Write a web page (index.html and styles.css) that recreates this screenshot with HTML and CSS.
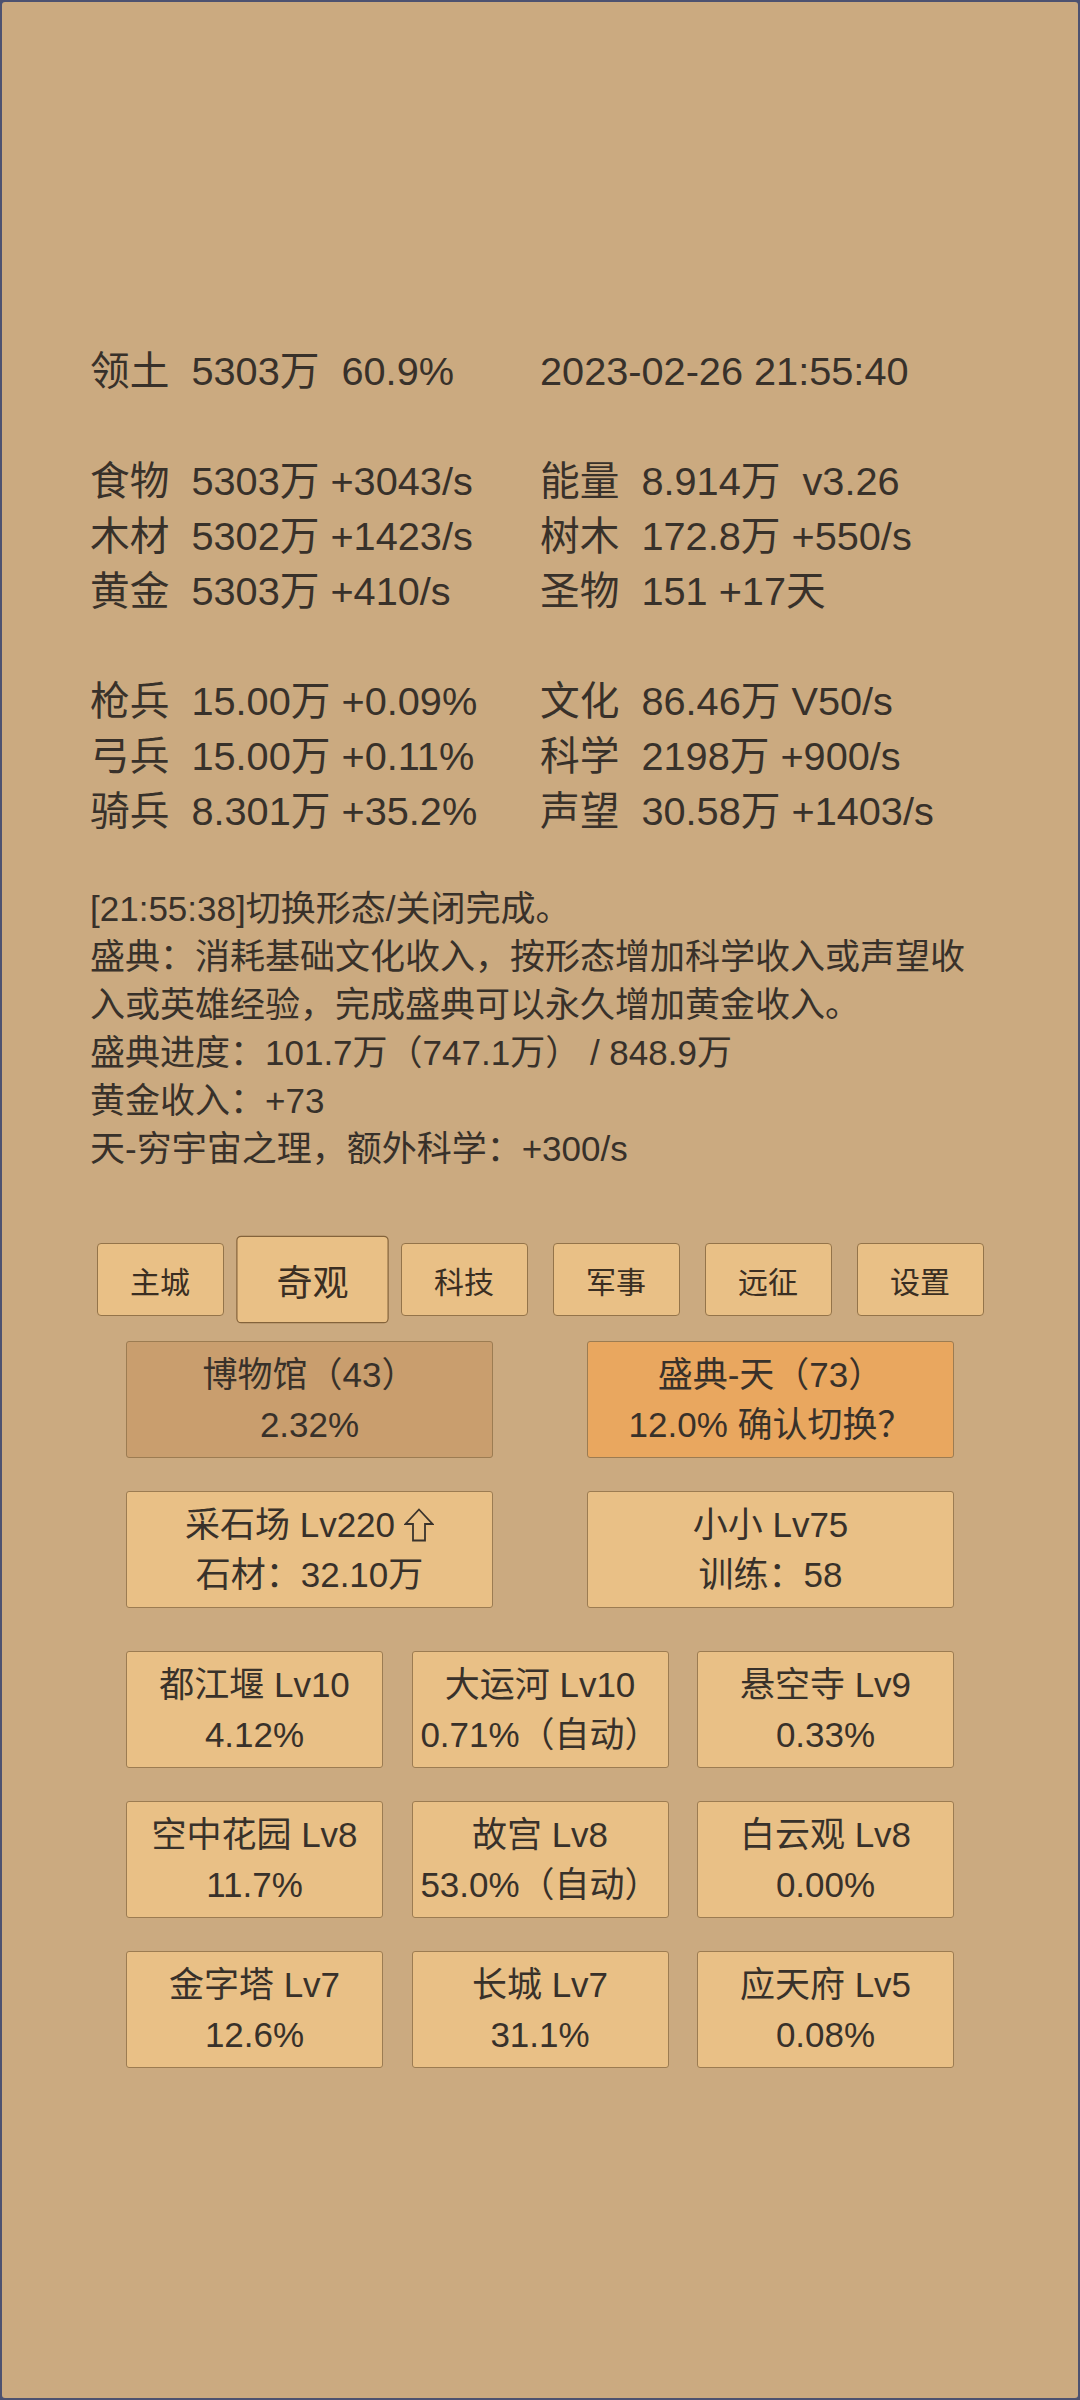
FILE: index.html
```html
<!DOCTYPE html>
<html lang="zh-CN">
<head>
<meta charset="utf-8">
<title>奇观</title>
<link rel="stylesheet" href="styles.css">
</head>
<body>
<div class="screen">
  <section class="stats">
    <div class="col">
      <div class="line">领土  5303万  60.9%</div>
      <div class="line"></div>
      <div class="line">食物  5303万 +3043/s</div>
      <div class="line">木材  5302万 +1423/s</div>
      <div class="line">黄金  5303万 +410/s</div>
      <div class="line"></div>
      <div class="line">枪兵  15.00万 +0.09%</div>
      <div class="line">弓兵  15.00万 +0.11%</div>
      <div class="line">骑兵  8.301万 +35.2%</div>
    </div>
    <div class="col">
      <div class="line">2023-02-26 21:55:40</div>
      <div class="line"></div>
      <div class="line">能量  8.914万  v3.26</div>
      <div class="line">树木  172.8万 +550/s</div>
      <div class="line">圣物  151 +17天</div>
      <div class="line"></div>
      <div class="line">文化  86.46万 V50/s</div>
      <div class="line">科学  2198万 +900/s</div>
      <div class="line">声望  30.58万 +1403/s</div>
    </div>
  </section>

  <section class="log">
    <p>[21:55:38]切换形态/关闭完成。</p>
    <p>盛典：消耗基础文化收入，按形态增加科学收入或声望收入或英雄经验，完成盛典可以永久增加黄金收入。</p>
    <p>盛典进度：101.7万（747.1万） / 848.9万</p>
    <p>黄金收入：+73</p>
    <p>天-穷宇宙之理，额外科学：+300/s</p>
  </section>

  <nav class="tabs">
    <button class="tab">主城</button>
    <button class="tab active">奇观</button>
    <button class="tab">科技</button>
    <button class="tab">军事</button>
    <button class="tab">远征</button>
    <button class="tab">设置</button>
  </nav>

  <section class="cards two">
    <div class="card dim"><span>博物馆（43）</span><span>2.32%</span></div>
    <div class="card hot"><span>盛典-天（73）</span><span>12.0% 确认切换？</span></div>
    <div class="card"><span>采石场 Lv220 <svg class="up" width="30" height="34" viewBox="0 0 30 34"><path d="M15 1.5 L28.5 16 L21 16 L21 32.5 L9 32.5 L9 16 L1.5 16 Z" fill="none" stroke="#3a332c" stroke-width="1.8" stroke-linejoin="miter"/></svg></span><span>石材：32.10万</span></div>
    <div class="card"><span>小小 Lv75</span><span>训练：58</span></div>
  </section>

  <section class="cards three">
    <div class="card"><span>都江堰 Lv10</span><span>4.12%</span></div>
    <div class="card"><span>大运河 Lv10</span><span>0.71%（自动）</span></div>
    <div class="card"><span>悬空寺 Lv9</span><span>0.33%</span></div>
    <div class="card"><span>空中花园 Lv8</span><span>11.7%</span></div>
    <div class="card"><span>故宫 Lv8</span><span>53.0%（自动）</span></div>
    <div class="card"><span>白云观 Lv8</span><span>0.00%</span></div>
    <div class="card"><span>金字塔 Lv7</span><span>12.6%</span></div>
    <div class="card"><span>长城 Lv7</span><span>31.1%</span></div>
    <div class="card"><span>应天府 Lv5</span><span>0.08%</span></div>
  </section>
</div>
</body>
</html>
```

FILE: styles.css
```css
* {
  box-sizing: border-box;
}

html, body {
  margin: 0;
  padding: 0;
  background: #4d5270;
}

body {
  font-family: "Liberation Sans", "Noto Sans CJK SC", "DejaVu Sans", sans-serif;
  color: #38312a;
}

.screen {
  width: 1080px;
  height: 2400px;
  border: 2px solid #4d5270;
  border-radius: 5px;
  background: #cbaa80;
  padding: 342px 88px 0 88px;
  overflow: hidden;
}

.stats {
  display: grid;
  grid-template-columns: 450px 1fr;
  font-size: 39.7px;
  line-height: 55px;
}

.line {
  height: 55px;
  white-space: pre;
}

.log {
  margin-top: 46px;
  width: 904px;
  font-size: 35px;
  line-height: 48px;
}

.log p {
  margin: 0;
}

.tabs {
  margin-top: 70px;
  display: flex;
  justify-content: center;
  gap: 25px;
}

.tab {
  width: 127px;
  height: 73px;
  padding: 0;
  border: 1.5px solid #94744a;
  border-radius: 4px;
  background: #e9c086;
  font-family: "Liberation Sans", "Noto Sans CJK SC", sans-serif;
  font-size: 30px;
  color: #3a2e22;
  display: flex;
  align-items: center;
  justify-content: center;
}

.tab.active {
  transform: scale(1.2);
  position: relative;
  z-index: 1;
  border-color: #84633b;
}

.cards {
  display: grid;
  justify-content: center;
  row-gap: 33px;
}

.cards.two {
  margin-top: 25px;
  grid-template-columns: 367px 367px;
  column-gap: 94px;
}

.cards.three {
  margin-top: 43px;
  grid-template-columns: 257px 257px 257px;
  column-gap: 28.5px;
}

.card {
  height: 117px;
  border: 1.5px solid #9c7c52;
  border-radius: 3px;
  background: #e9c086;
  font-size: 35px;
  line-height: 50px;
  display: flex;
  flex-direction: column;
  align-items: center;
  justify-content: center;
  white-space: nowrap;
}

.card span {
  display: flex;
  align-items: center;
}

.card.dim {
  background: #c99e6e;
}

.card.hot {
  background: #e9a75f;
}

.up {
  margin-left: 9px;
  display: block;
}
```
